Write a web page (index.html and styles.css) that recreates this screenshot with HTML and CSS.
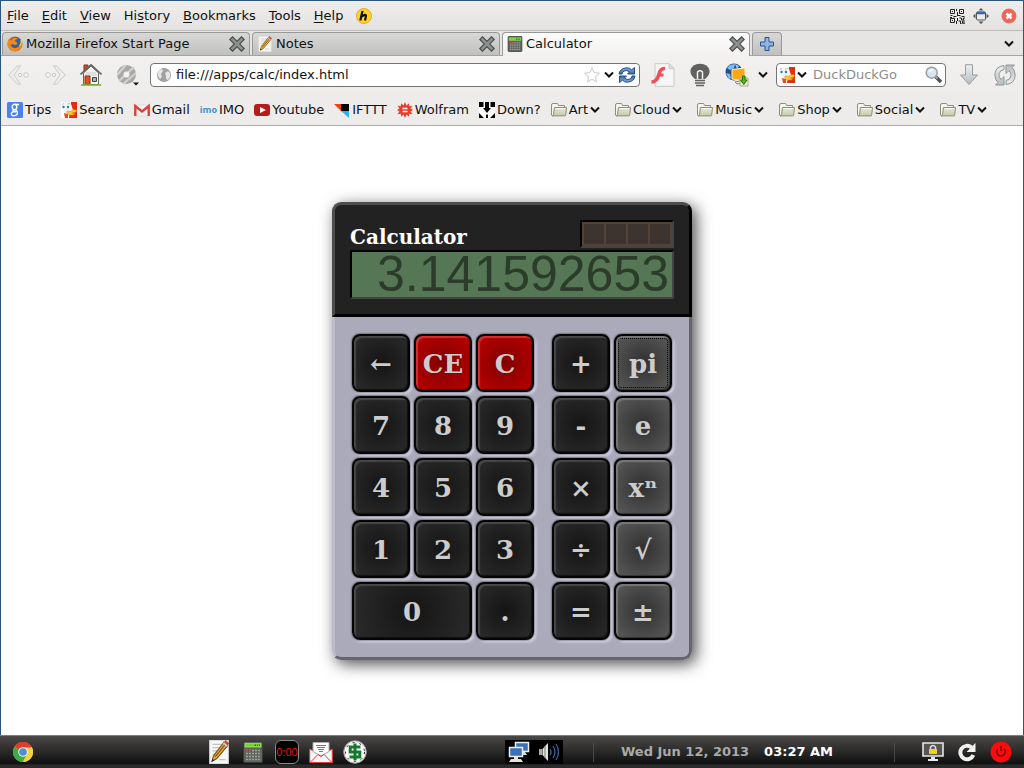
FILE: index.html
```html
<!DOCTYPE html>
<html lang="en">
<head>
<meta charset="utf-8">
<title>Calculator</title>
<link rel="stylesheet" href="styles.css">
</head>
<body>
<svg class="defs" aria-hidden="true">
  <defs>
    <linearGradient id="g-blue" x1="0" y1="0" x2="0" y2="1"><stop offset="0" stop-color="#8ab4e6"/><stop offset="1" stop-color="#3465a4"/></linearGradient>
    <linearGradient id="g-grey" x1="0" y1="0" x2="0" y2="1"><stop offset="0" stop-color="#eeeeee"/><stop offset="1" stop-color="#b5bcc0"/></linearGradient>
    <linearGradient id="g-folder" x1="0" y1="0" x2="0" y2="1"><stop offset="0" stop-color="#e8ebdc"/><stop offset="1" stop-color="#c3c9a8"/></linearGradient>
  </defs>
  <symbol id="close" viewBox="0 0 16 16"><path d="M3.500 3.500l9 9M12.500 3.500l-9 9" stroke="#4a4e4e" stroke-width="5" stroke-linecap="square"/><path d="M3.500 3.500l9 9M12.500 3.500l-9 9" stroke="#8d918f" stroke-width="2.600" stroke-linecap="square"/></symbol>
  <symbol id="chevron" viewBox="0 0 10 8"><path d="M1 1.500l4 4 4-4" fill="none" stroke="#111" stroke-width="2"/></symbol>
  <symbol id="folder" viewBox="0 0 16 16"><path d="M.5 13.500V3q0-1.500 1.500-1.500h4q1 0 1.200 1l.3 1h6V6" fill="#f5f5ee" stroke="#8c9073"/><path d="M3.500 5.500h12l-.8 7.500q0 .9-1 .9H1q1.300 0 1.500-1.500z" fill="url(#g-folder)" stroke="#8c9073"/><path d="M4.500 6.500h10" stroke="#fafaf3"/></symbol>
  <symbol id="duck" viewBox="0 0 16 16"><path d="M0 0h16v16H0z" fill="#fff"/><path d="M10 0h6v16H8z" fill="#dc3010"/><path d="M3 11l4 1v4H4z" fill="#e5491f"/><path d="M1 1l5-1 4 2 2 6-2 4-6-1-3-6z" fill="#f3f5f7"/><path d="M1 2.500l2-1M6 2l3-.5" stroke="#d8b8a0"/><circle cx="2.500" cy="5" r="1.200" fill="#237cc0"/><circle cx="7" cy="5" r="1.200" fill="#237cc0"/><path d="M6 9q4 1 7-1.500l3 1q-1 2-5 2.500l3 .5q-1 2-5 1.500-4-.5-3-4z" fill="#fcc52b" stroke="#d68b14" stroke-width=".5"/></symbol>
  <symbol id="notepad" viewBox="0 0 18 22"><path d="M.5.5h17v21H.5z" fill="#f7f7f5" stroke="#dedede"/><path d="M3 4h9M3 7h9M3 10h8M3 13h5M9 18h6" stroke="#c4c4c4"/><path d="M13.500 2l3.500 3L7 17l-4.500 2.500L4 14.500z" fill="#edb03e" stroke="#71521f"/><path d="M14.700 4L5.500 15.500" stroke="#8c5c17" stroke-width="1.300"/><path d="M13.500 2l3.500 3 1.500-2-3.500-3z" fill="#dd4038"/><path d="M12.500 3.200l3.500 3 1-1.200-3.500-3z" fill="#c9d0d6"/><path d="M3 17.500l1.800 1.200-2.400.9z" fill="#222"/></symbol>
  <symbol id="calc" viewBox="0 0 22 22"><rect x="1.500" y=".5" width="19" height="21" rx="1.500" fill="#60645f" stroke="#3a3d3a"/><path d="M3 2.500h16V6H3z" fill="#74d62a" stroke="#b5e87c" stroke-width=".7"/><path d="M12.500 4.200H14m1 0h1m1 0h1" stroke="#286e0b" stroke-width="1.600"/><path d="M4 9.500h14M4 12.500h14M4 15.500h14M4 18.500h14" stroke="#9da19b" stroke-width="1.600" stroke-dasharray="2 1"/><path d="M4 9.500h5" stroke="#f03535" stroke-width="2" stroke-dasharray="2 1"/></symbol>
</svg>

<div class="browser">
  <nav class="menubar" aria-label="Menu">
    <button class="menu"><u>F</u>ile</button>
    <button class="menu"><u>E</u>dit</button>
    <button class="menu"><u>V</u>iew</button>
    <button class="menu">Hi<u>s</u>tory</button>
    <button class="menu"><u>B</u>ookmarks</button>
    <button class="menu"><u>T</u>ools</button>
    <button class="menu"><u>H</u>elp</button>
    <button class="icon" aria-label="Add-on"><svg width="16" height="16" viewBox="0 0 16 16"><circle cx="8" cy="8" r="7.500" fill="#ffd51e" stroke="#e9a43c"/><path d="M6.500 3L4.300 12.500M5.500 8.500q4.500-3 4.500-.5L9 12.500" fill="none" stroke="#111" stroke-width="2.200"/></svg></button>
    <span class="grow"></span>
    <div class="window-tools">
      <button class="icon" aria-label="QR code"><svg width="16" height="16" viewBox="0 0 16 16" fill="none" stroke="#222"><path d="M1.500 1.500h4v4h-4zM10.500 1.500h4v4h-4zM1.500 10.500h4v4h-4z"/><path d="M3 3.500h1M12 3.500h1M3 12.500h1M7.500 1v2m1 1v3m-7 .5h2m1 1h3m2-1h2m1 1h3m-7 1.500v3m-1 0v3m3-6h2v2h2v-2h2v3h-3v2h3v1h-5v-3h-2m0 4h2M1 9.500h2m2-1v1m3-2h2"/></svg></button>
      <button class="icon" aria-label="Full screen"><svg width="16" height="16" viewBox="0 0 16 16"><rect x="3.500" y="4" width="9" height="8" rx="1" fill="#e8eaec" stroke="#555"/><path d="M4 5h8" stroke="#3467a8" stroke-width="2.500"/><path d="M5.500 2.500L8 0l2.500 2.500zM5.500 13.500L8 16l2.500-2.500zM2.500 5.500L0 8l2.500 2.500zM13.500 5.500L16 8l-2.500 2.500z" fill="#555"/></svg></button>
      <button class="icon" aria-label="Close window"><svg width="16" height="16" viewBox="0 0 16 16"><circle cx="8" cy="8" r="7" fill="#f26452" stroke="#dc6e63"/><path d="M5.500 5.500l5 5m0-5l-5 5" stroke="#fff" stroke-width="2.500"/></svg></button>
    </div>
  </nav>

  <div class="tabbar">
    <div class="tab"><svg width="16" height="16" viewBox="0 0 16 16"><circle cx="8" cy="8" r="7.500" fill="#d9600d"/><circle cx="8.500" cy="6.500" r="5.500" fill="#2f61a7"/><path d="M6 2q3-1 5 1-3 0-3 2 3 1 2 3-2 2-4 0-2 0-2 2 2 3 5 2 4-1 5-6 2 4-1 7-4 3.500-9 1.500Q-.5 11 1 4.500L2 2.500l2 2z" fill="#ef8a1b"/><path d="M14 4q1 4-1.500 6" fill="none" stroke="#fbd244" stroke-width="1.300"/></svg><span class="tab-name">Mozilla Firefox Start Page</span><button class="icon" aria-label="Close tab"><svg width="16" height="16"><use href="#close"/></svg></button></div>
    <div class="tab"><svg width="16" height="16"><use href="#notepad"/></svg><span class="tab-name">Notes</span><button class="icon" aria-label="Close tab"><svg width="16" height="16"><use href="#close"/></svg></button></div>
    <div class="tab active"><svg width="16" height="16"><use href="#calc"/></svg><span class="tab-name">Calculator</span><button class="icon" aria-label="Close tab"><svg width="16" height="16"><use href="#close"/></svg></button></div>
    <button class="new-tab" aria-label="New tab"><svg width="14" height="14" viewBox="0 0 14 14"><path d="M5 .5h4V5h4.500v4H9v4.500H5V9H.5V5H5z" fill="#8fb5e3" stroke="#27528f"/></svg></button>
    <span class="grow"></span>
    <button class="all-tabs" aria-label="List all tabs"><svg width="10" height="8"><use href="#chevron"/></svg></button>
  </div>

  <div class="navbar">
    <button class="icon" aria-label="Back"><svg width="22" height="20" viewBox="0 0 22 20"><path d="M9.500.8L.8 10l8.700 9.200h3L6 10 12.500.8z" fill="#ededed" stroke="#c9c9c9"/><circle cx="12" cy="10" r="1.700" fill="#f4f4f4" stroke="#c9c9c9"/><circle cx="18" cy="10" r="2.300" fill="#f4f4f4" stroke="#c9c9c9"/></svg></button>
    <button class="icon forward" aria-label="Forward"><svg width="22" height="20" viewBox="0 0 22 20"><path d="M12.500.8l8.700 9.200-8.700 9.200h-3L16 10 9.500.8z" fill="#ededed" stroke="#c9c9c9"/><circle cx="10" cy="10" r="1.700" fill="#f4f4f4" stroke="#c9c9c9"/><circle cx="4" cy="10" r="2.300" fill="#f4f4f4" stroke="#c9c9c9"/></svg></button>
    <button class="icon home" aria-label="Home"><svg width="22" height="22" viewBox="0 0 22 22"><path d="M4 1h4v6H4z" fill="#d9481a" stroke="#80341d"/><path d="M3.500 9L11 2l7.500 7v11.500h-15z" fill="#f2f2ee" stroke="#666"/><path d="M6 9h10M5 11h12" stroke="#ccc"/><path d="M.5 10.500L11 .8l10.500 9.700" fill="none" stroke="#62665f" stroke-width="1.600"/><path d="M5 12h5v8.500H5z" fill="#df5320" stroke="#94300e"/><path d="M12.500 13.500h4v4h-4z" fill="#a2b3c4" stroke="#444"/><path d="M1 21h20" stroke="#7bb52d" stroke-width="1.600"/></svg></button>
    <button class="icon" aria-label="Page tools"><svg width="22" height="22" viewBox="0 0 22 22"><circle cx="9.500" cy="10.500" r="9.500" fill="#a8a8a8"/><path d="M0 11L9 1M2 17L17 3M6 20L19 9" stroke="#d3d3d3" stroke-width="2"/><circle cx="9.500" cy="10.500" r="3" fill="#f2f1f0"/><path d="M16 18.500h6l-3 3z" fill="#111"/></svg></button>
    <div class="field address">
      <svg width="16" height="16" viewBox="0 0 16 16"><circle cx="8" cy="8" r="7" fill="#a0a0a0"/><path d="M3 3l3-1 1 2-2 3 1 3-2 2-2-3V5zM9 6l3-2 2 2v4l-2 3-2-1V9z" fill="#e5e5e5"/></svg>
      <input type="text" aria-label="Address" value="file:///apps/calc/index.html">
      <button class="icon" aria-label="Bookmark this page"><svg width="16" height="16" viewBox="0 0 16 16"><path d="M8 .8l2.200 4.800 5.200.6-3.900 3.500 1 5.200L8 12.300l-4.500 2.600 1-5.200L.6 6.200l5.200-.6z" fill="#fdfdfd" stroke="#c9c9c9"/></svg></button>
      <button class="icon" aria-label="History"><svg width="10" height="8"><use href="#chevron"/></svg></button>
      <button class="icon" aria-label="Reload"><svg width="18" height="16" viewBox="0 0 18 16"><path id="reload-arrow" d="M1 7Q2 1 9 .8q3 0 4.500 2L16.500.5V7h-7l2-2Q9 2.500 6 4 4.500 4.500 4 7z" fill="url(#g-blue)" stroke="#234d87"/><use href="#reload-arrow" transform="rotate(180 9 8)"/></svg></button>
    </div>
    <button class="icon flash" aria-label="Flash"><svg width="24" height="24" viewBox="0 0 24 24"><path d="M4 .7h14l5 5v17.600H4z" fill="#f6f6f6" stroke="#c8c8c8"/><path d="M18 .7v5h5z" fill="#ddd" stroke="#c8c8c8"/><path d="M14 5.500Q9.500 5 8 11q-2 8-7.500 8" fill="none" stroke="#ee5057" stroke-width="3.500"/><path d="M6.500 12h6" stroke="#ee5057" stroke-width="3"/></svg></button>
    <button class="icon bulb" aria-label="Lights"><svg width="20" height="24" viewBox="0 0 20 24"><path d="M5 16q-5-4-4.500-8.500Q2 1 10 .8q8 .2 9.500 6.700Q20 12 15 16z" fill="#616161"/><path d="M7.500 16V9q2.500-2.500 5 0v7" fill="none" stroke="#f2f1f0" stroke-width="1.500"/><path d="M5 17.500h10M5 20h10M6 22.500h8" stroke="#616161" stroke-width="1.700"/></svg></button>
    <button class="icon proxy" aria-label="Proxy"><svg width="24" height="24" viewBox="0 0 24 24"><circle cx="9" cy="9" r="8.500" fill="#244f91"/><path d="M2 5l3-3 5-1-1 4-4 2zM1 10l4 1 1 4-2 1z" fill="#82bce8"/><path d="M10 1l4 2-2 3z" fill="#9ecbed"/><path d="M7 6.500l13-1.500v13l-13-2z" fill="#fda812" stroke="#fff2c4"/><path d="M10 19l5-1 4 2-7 1z" fill="#e6e6e6" stroke="#888"/><path d="M15 15h8v8h-8z" fill="#f1eedc" stroke="#aaa78c"/><path d="M17.500 13h2.500v4h2l-3.200 4.500L15.500 17h2z" fill="#55b51b" stroke="#247200"/></svg></button>
    <button class="icon proxy-menu" aria-label="Proxy menu"><svg width="10" height="8"><use href="#chevron"/></svg></button>
    <div class="field search">
      <button class="icon engine" aria-label="Search engine"><svg width="16" height="16"><use href="#duck"/></svg><svg width="10" height="8"><use href="#chevron"/></svg></button>
      <input type="text" aria-label="Search" placeholder="DuckDuckGo">
      <button class="icon" aria-label="Go"><svg width="18" height="18" viewBox="0 0 18 18"><path d="M10 10l6 6" stroke="#4f5354" stroke-width="3.500"/><path d="M9.500 9.500l3 3" stroke="#bbb" stroke-width="1.500"/><circle cx="6.700" cy="6.700" r="5.500" fill="#d7e5f2" stroke="#9a9d9e" stroke-width="1.500"/><path d="M4 6q1-2.500 4-2" fill="none" stroke="#fff" stroke-width="1.500"/></svg></button>
    </div>
    <button class="icon downloads" aria-label="Downloads"><svg width="18" height="22" viewBox="0 0 18 22"><path d="M5.500.7h7V11h5L9 20.500.5 11h5z" fill="url(#g-grey)" stroke="#9a9d9f"/></svg></button>
    <button class="icon" aria-label="Sync"><svg width="22" height="22" viewBox="0 0 22 22"><path id="sync-arrow" d="M10 1.500Q1 2.500.8 11 1 16 4 18.500L1.500 21H10v-8.500l-3 3Q4.500 13 5 10q1-4 5-4.500z" fill="url(#g-grey)" stroke="#8f9699"/><use href="#sync-arrow" transform="rotate(180 11 11)"/></svg></button>
  </div>

  <div class="bookmarks">
    <a href="#"><svg width="16" height="16" viewBox="0 0 16 16"><rect width="16" height="16" rx="1.500" fill="#4b82ee"/><g fill="none" stroke="#fff" stroke-width="1.400"><ellipse cx="7.500" cy="5" rx="2.300" ry="2.700"/><path d="M8 2.500h4M8 7.700q3.500 2 2 4.800-2 2-5 .8-2-2.300 1.500-3.600h2.500M6.500 7.500q-1.500 1.500 1 2"/></g></svg>Tips</a>
    <a href="#"><svg width="16" height="16"><use href="#duck"/></svg>Search</a>
    <a href="#"><svg width="16" height="16" viewBox="0 0 16 16"><path d="M1 3h14v11H1z" fill="#f4f4f4" stroke="#ddd"/><path d="M1.300 14V4L8 9.500 14.700 4v10" fill="none" stroke="#d9413b" stroke-width="2.400"/><path d="M3 14l4-4m6 4l-4-4" stroke="#ddd"/></svg>Gmail</a>
    <a href="#"><span class="imo">imo</span>IMO</a>
    <a href="#"><svg width="16" height="16" viewBox="0 0 16 16"><rect y="2" width="16" height="12" rx="3" fill="#b51d1c"/><path d="M6 5l6 3-6 3z" fill="#fff"/></svg>Youtube</a>
    <a href="#"><svg width="16" height="16" viewBox="0 0 16 16"><path d="M0 2h7v7z" fill="#f3440e"/><path d="M7 2h8v7H7z" fill="#050505"/><path d="M7 9h8v7z" fill="#2ab5ec"/></svg>IFTTT</a>
    <a href="#"><svg width="16" height="16" viewBox="0 0 16 16"><path d="M8 0l1.500 3.500L12 1.200l.2 3 3.300-.4-2 2.700 2.500 1.500-2.500 1.500 2 2.700-3.300-.4-.2 3-2.500-2.300L8 16l-1.500-3.500L4 14.800l-.2-3-3.300.4 2-2.700L0 8l2.500-1.500-2-2.700 3.300.4.2-3 2.500 2.300z" fill="#e73e26"/><path d="M5.500 6.500h5m-5 3h5" stroke="#fff" stroke-width="1.400"/></svg>Wolfram</a>
    <a href="#"><svg width="16" height="16" viewBox="0 0 16 16"><path d="M0 0h16v16H0z" fill="#050505"/><path d="M4.500 0h1.500v6l2 2 2-2V0h1.500v5H16L8 13 0 5h4.500zM0 5l7 7v4H5L0 11zM16 5l-7 7v4h2l5-5z" fill="#fff"/><path d="M6 0h4v6l2 0-4 5-4-5h2z" fill="#050505"/></svg>Down?</a>
    <a class="folder" href="#"><svg width="16" height="16"><use href="#folder"/></svg>Art<svg width="10" height="8"><use href="#chevron"/></svg></a>
    <a class="folder" href="#"><svg width="16" height="16"><use href="#folder"/></svg>Cloud<svg width="10" height="8"><use href="#chevron"/></svg></a>
    <a class="folder" href="#"><svg width="16" height="16"><use href="#folder"/></svg>Music<svg width="10" height="8"><use href="#chevron"/></svg></a>
    <a class="folder" href="#"><svg width="16" height="16"><use href="#folder"/></svg>Shop<svg width="10" height="8"><use href="#chevron"/></svg></a>
    <a class="folder" href="#"><svg width="16" height="16"><use href="#folder"/></svg>Social<svg width="10" height="8"><use href="#chevron"/></svg></a>
    <a class="folder" href="#"><svg width="16" height="16"><use href="#folder"/></svg>TV<svg width="10" height="8"><use href="#chevron"/></svg></a>
  </div>

  <main class="page">
    <section class="calculator">
      <div class="calc-head">
        <div class="calc-top">
          <h1>Calculator</h1>
          <div class="solar"><i></i><i></i><i></i><i></i></div>
        </div>
        <input class="lcd" type="text" aria-label="Result" value="3.141592653" readonly>
      </div>
      <div class="keypad">
        <div class="keys digits">
          <button class="key">←</button><button class="key red">CE</button><button class="key red">C</button>
          <button class="key">7</button><button class="key">8</button><button class="key">9</button>
          <button class="key">4</button><button class="key">5</button><button class="key">6</button>
          <button class="key">1</button><button class="key">2</button><button class="key">3</button>
          <button class="key wide">0</button><button class="key">.</button>
        </div>
        <div class="keys operators">
          <button class="key">+</button><button class="key grey focused">pi</button>
          <button class="key">-</button><button class="key grey">e</button>
          <button class="key">×</button><button class="key grey">xⁿ</button>
          <button class="key">÷</button><button class="key grey">√</button>
          <button class="key">=</button><button class="key grey">±</button>
        </div>
      </div>
    </section>
  </main>
</div>

<footer class="taskbar">
  <button class="icon" aria-label="Chrome"><svg width="20" height="20" viewBox="0 0 20 20"><circle cx="10" cy="10" r="10" fill="#fbd23c"/><path d="M10 10L1.300 5A10 10 0 0 1 18.700 5z" fill="#df3b2e"/><path d="M10 10L1.300 5A10 10 0 0 0 10 20l4-8z" fill="#3faa49"/><path d="M10 5.500h9A10 10 0 0 1 10 20l4.300-8z" fill="#fbd23c"/><circle cx="10" cy="10" r="4.800" fill="#f3f3f3"/><circle cx="10" cy="10" r="3.800" fill="#4c8fd6"/></svg></button>
  <div class="launchers">
    <button class="icon" aria-label="Notes"><svg width="20" height="24"><use href="#notepad"/></svg></button>
    <button class="icon" aria-label="Calculator"><svg width="22" height="22"><use href="#calc"/></svg></button>
    <button class="icon timer" aria-label="Timer">0:00</button>
    <button class="icon" aria-label="Mail"><svg width="24" height="24" viewBox="0 0 24 24"><path d="M.7 9L12 15 23.300 9v13.500H.7z" fill="#f6f6f6" stroke="#e03b38"/><path d="M4 2.500h16v9L12 16l-8-4.500z" fill="#fff" stroke="#aaa"/><path d="M7 5.500h10M8 7.500h8M9 9.500h6M10 11.500h4" stroke="#777"/><path d="M1 22.500l8-8 3 2 3-2 8 8" fill="none" stroke="#e03b38"/></svg></button>
    <button class="icon" aria-label="Money"><svg width="24" height="24" viewBox="0 0 24 24"><circle cx="12" cy="12" r="11.300" fill="#eee" stroke="#999"/><circle cx="12" cy="12" r="9.500" fill="#fff" stroke="#222" stroke-dasharray="2 5"/><path d="M17.500 7H7.200v5h9.600v5H6.500M12 3.500v17" fill="none" stroke="#14792d" stroke-width="3"/></svg></button>
  </div>
  <span class="grow"></span>
  <div class="tray">
    <svg width="22" height="22" viewBox="0 0 22 22"><path d="M7.500 1.500h13v9h-13z" fill="#3b70b4" stroke="#eee" stroke-width="1.500"/><path d="M11 11h6l2 3h-9z" fill="#ddd"/><path d="M1.500 6.500h13v9h-13z" fill="#3b70b4" stroke="#eee" stroke-width="1.500"/><path d="M6 16h4v2h3l2 3H1l2-3h3z" fill="#e4e4dc"/></svg>
    <svg width="22" height="22" viewBox="0 0 22 22"><path d="M1 8h3v6H1z" fill="#aaa"/><path d="M4.500 8L10 2v18l-5.500-6z" fill="#e5e5df"/><path d="M7 5v12" stroke="#777"/><path d="M12 8q2 3 0 6m3-9q4 6 0 12m3-14q5 8 0 16" fill="none" stroke="#39659a" stroke-width="1.300"/></svg>
  </div>
  <span class="divider"></span>
  <div class="clock"><span>Wed Jun 12, 2013</span><time>03:27 AM</time></div>
  <span class="divider"></span>
  <div class="session">
    <button class="icon" aria-label="Lock"><svg width="22" height="20" viewBox="0 0 22 20"><path d="M1 1h20v13H1z" fill="#555" stroke="#e8e8e8" stroke-width="1.600"/><path d="M9 15h4v2h3v2H6v-2h3z" fill="#e8e8e8"/><path d="M8.500 7V5q2.500-3 5 0v2" fill="none" stroke="#ddd" stroke-width="1.500"/><path d="M7 7h8v5H7z" fill="#f3d21c"/></svg></button>
    <button class="icon" aria-label="Restart"><svg width="20" height="20" viewBox="0 0 20 20"><path d="M14.500 5.500a6.700 6.700 0 1 0 1.800 7.500" fill="none" stroke="#f0f0ee" stroke-width="4"/><path d="M18.500 1v9h-9z" fill="#f0f0ee"/></svg></button>
    <button class="icon" aria-label="Shut down"><svg width="22" height="22" viewBox="0 0 22 22"><circle cx="11" cy="11" r="10.500" fill="#f90c0c"/><path d="M8 7.500a4.300 4.300 0 1 0 6 0M11 5v5" fill="none" stroke="#8d0707" stroke-width="1.600"/></svg></button>
  </div>
</footer>
</body>
</html>
```
FILE: styles.css
```css
* { box-sizing: border-box; }

body {
  margin: 0;
  min-height: 100vh;
  display: flex;
  flex-direction: column;
  font: 13px/18px "DejaVu Sans", sans-serif;
  color: #111;
  background: #fff;
}

button, input { font: inherit; color: inherit; }
button { padding: 0; border: 0; background: none; }
svg { display: block; flex: none; }
.defs { position: absolute; width: 0; height: 0; }
.grow { flex: 1; }
.icon { display: flex; align-items: center; justify-content: center; flex: none; }

.browser {
  flex: 1;
  display: flex;
  flex-direction: column;
  border: 1px solid #2c5680;
  border-bottom: 0;
}

/* Menu bar */
.menubar {
  height: 30px;
  display: flex;
  align-items: center;
  gap: 13px;
  padding: 0 6px;
  background: linear-gradient(#efeeed, #e3e2e0);
  border-bottom: 1px solid #bdbcba;
}
.menu u { text-underline-offset: 2px; }
.window-tools { display: flex; gap: 8px; }
.window-tools .icon:last-child { padding-left: 4px; }

/* Tabs */
.tabbar {
  height: 25px;
  display: flex;
  gap: 2px;
  padding: 1px 8px 0 1px;
  background: #e6e5e4;
  border-bottom: 1px solid #a3a3a1;
}
.tab {
  flex: 0 1 248px;
  display: flex;
  align-items: center;
  gap: 3px;
  padding: 0 4px;
  border: 1px solid #989896;
  border-bottom: 0;
  border-radius: 4px 4px 0 0;
  background: linear-gradient(#d8d8d7, #c0c0be);
}
.tab-name { flex: 1; white-space: nowrap; overflow: hidden; }
.tab.active { margin-bottom: -1px; padding-bottom: 1px; background: linear-gradient(#fbfbfb, #f2f1f0); }
.new-tab {
  width: 30px;
  display: flex;
  align-items: center;
  justify-content: center;
  border: 1px solid #989896;
  border-bottom: 0;
  border-radius: 4px 4px 0 0;
  background: linear-gradient(#d8d8d7, #c0c0be);
}
.all-tabs { padding: 0 1px; }

/* Navigation */
.navbar {
  height: 39px;
  display: flex;
  align-items: center;
  padding: 0 7px 2px;
  background: linear-gradient(#f2f1f0, #edecea);
}
.forward { margin-left: 14px; }
.home { margin: 0 15px 0 14px; }
.field {
  height: 24px;
  display: flex;
  align-items: center;
  background: #fff;
  border: 1px solid #737373;
  border-radius: 4px;
}
.field input { flex: 1; min-width: 0; border: 0; outline: 0; padding: 0; background: none; }
.field input::placeholder { color: #8c8c8c; opacity: 1; }
.address { flex: 1; gap: 4px; margin-left: 11px; padding: 0 3px 0 5px; }
.search { width: 170px; gap: 6px; margin-left: 8px; padding: 0 2px; }
.engine { gap: 2px; }
.flash { margin-left: 11px; }
.bulb { margin-left: 15px; }
.proxy { margin-left: 15px; }
.proxy-menu { margin-left: 9px; }
.downloads { margin: 0 16px 0 14px; }

/* Bookmarks */
.bookmarks {
  height: 31px;
  display: flex;
  align-items: center;
  gap: 10px;
  padding: 0 6px;
  background: #edecea;
  border-bottom: 1px solid #adacab;
}
.bookmarks a { display: flex; align-items: center; gap: 2px; color: inherit; text-decoration: none; white-space: nowrap; }
.bookmarks .folder { padding-right: 5px; }
.imo { font: bold 9px/16px "Open Sans", sans-serif; color: #3d8fce; }

/* Calculator page */
.page { flex: 1; display: grid; place-items: center; }
.calculator {
  border-radius: 9px;
  box-shadow: 4px 4px 16px rgba(0, 0, 0, .7);
  font-family: "DejaVu Serif", serif;
}
.calc-head {
  padding: 15px;
  background: #222;
  border: 3px solid;
  border-color: #4e4e4e #000 #000 #4e4e4e;
  border-radius: 9px 9px 0 0;
}
.calc-top { display: flex; justify-content: space-between; align-items: center; height: 30px; }
.calc-top h1 { margin: 4px 0 0; font-size: 20px; line-height: 26px; color: #fff; }
.solar {
  width: 94px;
  height: 28px;
  margin-bottom: 2px;
  display: grid;
  grid-template-columns: repeat(4, 1fr);
  gap: 2px;
  padding: 2px;
  background: #544335;
  border: 2px solid;
  border-color: #000 #444 #444 #000;
}
.solar i { background: #3d332f; }
.lcd {
  display: block;
  width: 324px;
  height: 49px;
  padding: 0 3px;
  border: 2px solid;
  border-color: #000 #444 #444 #000;
  border-radius: 2px;
  outline: 0;
  background: #557755;
  color: #2b3c2b;
  font: 50px/45px "Liberation Sans", sans-serif;
  text-align: right;
}
.keypad {
  display: flex;
  justify-content: space-between;
  padding: 17px;
  background: #aaaabb;
  border: 3px solid;
  border-color: transparent #666671 #666671 #bbbbc9;
  border-top: 0;
  border-radius: 0 0 9px 9px;
}
.keys { display: grid; gap: 4px; grid-auto-rows: 58px; }
.digits { grid-template-columns: repeat(3, 58px); }
.operators { grid-template-columns: repeat(2, 58px); }
.key {
  padding-top: 2px;
  border: 2px solid #050505;
  border-radius: 8px;
  background: radial-gradient(circle, #151515, #2b2b2b);
  box-shadow: inset 2px 2px 1px #484848, inset -1px -1px 1px #111, 0 0 2px #000, 2px 2px 3px #ddddf0;
  color: #ccc;
  font: bold 26px/50px "DejaVu Serif", serif;
  text-align: center;
}
.wide { grid-column: span 2; }
.red {
  background: radial-gradient(circle, #800000, #bb0000);
  box-shadow: inset 2px 2px 1px #d03030, inset -1px -1px 1px #700, 0 0 2px #000, 2px 2px 3px #ddddf0;
}
.grey {
  background: radial-gradient(circle, #303030, #5b5b5b);
  box-shadow: inset 2px 2px 1px #777, inset -1px -1px 1px #333, 0 0 2px #000, 2px 2px 3px #ddddf0;
}
.focused { outline: 1px dotted #000; outline-offset: -5px; }

/* Taskbar */
.taskbar {
  height: 33px;
  display: flex;
  align-items: center;
  padding: 0 12px 0 13px;
  background: linear-gradient(#4a4947, #111 85%, #2b2b2b 92%);
  border-top: 1px solid #3492d6;
  font: bold 13px/18px "DejaVu Sans", sans-serif;
}
.launchers { display: flex; align-items: center; gap: 10px; margin-left: 174px; }
.launchers .icon { width: 24px; }
.timer {
  height: 24px;
  border: 1px solid #888;
  border-radius: 6px;
  background: #000;
  color: #f01010;
  font: 11px/20px "Liberation Sans", sans-serif;
}
.tray { display: flex; gap: 8px; padding: 1px 3px; background: #000; }
.divider { width: 1px; height: 20px; background: #484848; margin: 0 27px 0 30px; }
.clock { display: flex; gap: 15px; padding-right: 31px; color: #aaa; white-space: nowrap; }
.clock time { color: #fff; }
.session { display: flex; align-items: center; gap: 13px; }
```
